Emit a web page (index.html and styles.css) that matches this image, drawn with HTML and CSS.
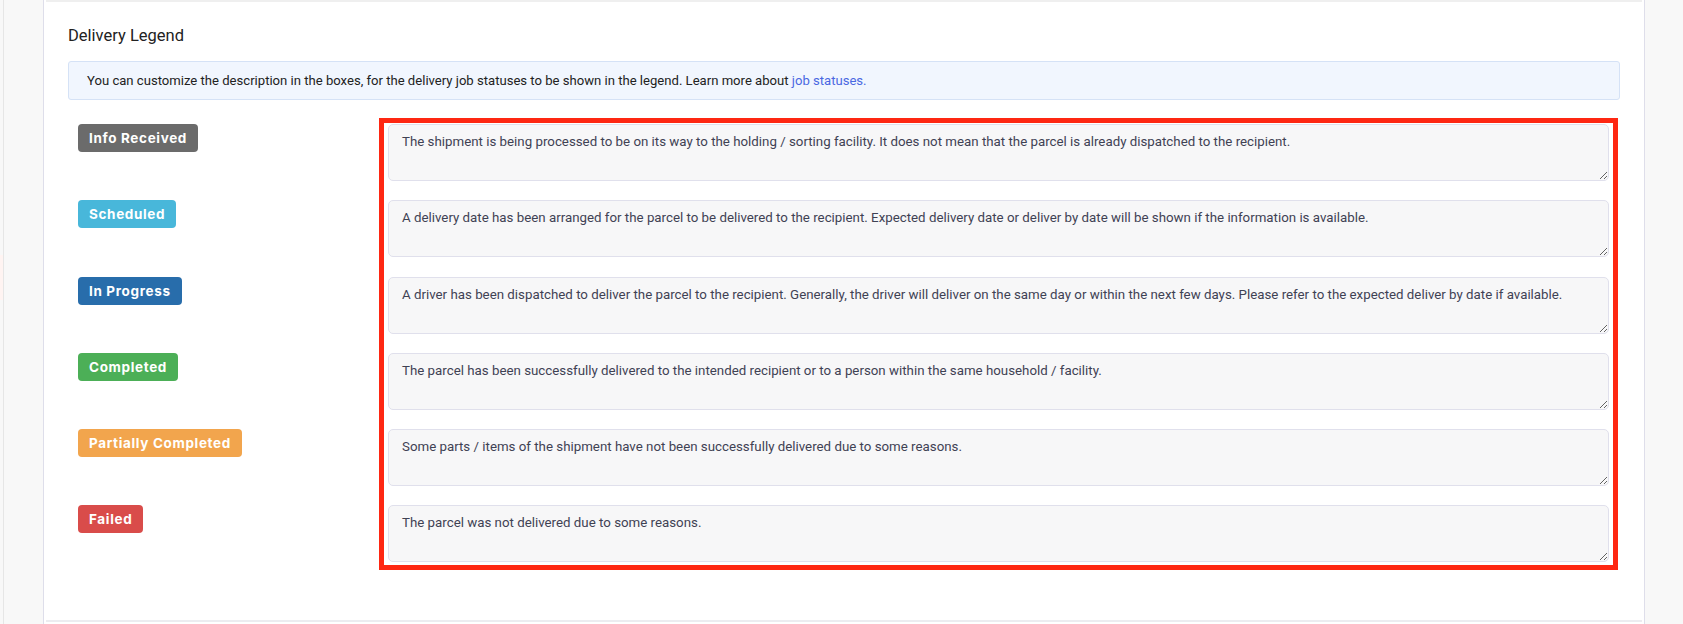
FILE: index.html
```html
<!DOCTYPE html>
<html lang="en">
<head>
    <meta charset="UTF-8">
    <meta name="viewport" content="width=device-width, initial-scale=1.0">
    <title>Delivery Legend</title>
    <link rel="stylesheet" href="styles.css">
</head>
<body>
    <div class="shell">
        <div class="side"><div class="side-mark"></div></div>

        <div class="panel">
            <div class="panel-top"></div>

            <div class="card">
                <h3 class="card-title">Delivery Legend</h3>

                <div class="notice">
                    You can customize the description in the boxes, for the delivery job statuses to be shown in the legend. Learn more about <a href="#">job statuses.</a>
                </div>

                <!-- Estados de entrega -->
                <div class="legend">
                    <div class="labels">
                        <div class="label-row"><span class="badge badge-info-received">Info Received</span></div>
                        <div class="label-row"><span class="badge badge-scheduled">Scheduled</span></div>
                        <div class="label-row"><span class="badge badge-progress">In Progress</span></div>
                        <div class="label-row"><span class="badge badge-completed">Completed</span></div>
                        <div class="label-row"><span class="badge badge-partial">Partially Completed</span></div>
                        <div class="label-row"><span class="badge badge-failed">Failed</span></div>
                    </div>

                    <div class="fields">
                        <textarea class="field">The shipment is being processed to be on its way to the holding / sorting facility. It does not mean that the parcel is already dispatched to the recipient.</textarea>
                        <textarea class="field">A delivery date has been arranged for the parcel to be delivered to the recipient. Expected delivery date or deliver by date will be shown if the information is available.</textarea>
                        <textarea class="field">A driver has been dispatched to deliver the parcel to the recipient. Generally, the driver will deliver on the same day or within the next few days. Please refer to the expected deliver by date if available.</textarea>
                        <textarea class="field">The parcel has been successfully delivered to the intended recipient or to a person within the same household / facility.</textarea>
                        <textarea class="field">Some parts / items of the shipment have not been successfully delivered due to some reasons.</textarea>
                        <textarea class="field">The parcel was not delivered due to some reasons.</textarea>
                    </div>
                </div>
            </div>

            <div class="panel-bottom"></div>
        </div>
    </div>
</body>
</html>
```

FILE: styles.css
```css
body {
    margin: 0;
    background-color: #f8f8f8;
    font-family: Roboto, "Noto Sans", sans-serif;
    color: #222;
    overflow: hidden;
}
.shell {
    display: flex;
    height: 624px;
}
.side {
    width: 39px;
    margin-left: 3px;
    border-left: 1px solid #e6e6e6;
}
.side-mark {
    width: 3px;
    height: 45px;
    margin-top: 255px;
    margin-left: -4px;
    background-color: #fff4f2;
}
.panel {
    width: 1600px;
    background-color: #fff;
    border-left: 1px solid #dedeea;
    border-right: 1px solid #dedeea;
    display: flex;
    flex-direction: column;
}
.panel-top {
    height: 2px;
    margin: 0 2px;
    background-color: #efefef;
}
.panel-bottom {
    height: 2px;
    margin: auto 2px 2px;
    background-color: #ececf0;
}
.card {
    padding: 0 24px;
}
.card-title {
    margin: 23px 0 14px;
    font-size: 16.5px;
    font-weight: 400;
    line-height: 22px;
    color: #222;
}

/* Caja de aviso */
.notice {
    height: 37px;
    padding: 0 18px;
    line-height: 37px;
    font-size: 13.1px;
    background-color: #f1f6fe;
    border: 1px solid #d5e2f6;
    border-radius: 3px;
}
.notice a {
    color: #4a68e2;
    text-decoration: none;
}

/* Leyenda */
.legend {
    display: flex;
    margin-top: 18px;
}
.labels {
    width: 301px;
    padding: 6px 0 0 10px;
    display: flex;
    flex-direction: column;
    gap: 19.3px;
}
.label-row {
    height: 57px;
}
.badge {
    display: inline-block;
    height: 28px;
    padding: 0 11px;
    line-height: 28px;
    font-family: Inter, "Noto Sans", sans-serif;
    font-size: 13.5px;
    font-weight: 700;
    letter-spacing: 0.65px;
    color: #fff;
    border-radius: 4px;
}
.badge-info-received { background-color: #6b6b6b; }
.badge-scheduled { background-color: #48b7da; }
.badge-progress { background-color: #286dab; }
.badge-completed { background-color: #4caf57; }
.badge-partial { background-color: #f2a54d; }
.badge-failed { background-color: #d94c4a; }

.fields {
    flex: 1;
    margin-right: 2px;
    padding: 1px 4px 3px;
    border: 5px solid #fe2712;
    display: flex;
    flex-direction: column;
    gap: 19.3px;
}
.field {
    display: block;
    box-sizing: border-box;
    width: 100%;
    height: 57px;
    margin: 0;
    padding: 7px 13px;
    font-family: Roboto, "Noto Sans", sans-serif;
    font-size: 13.3px;
    line-height: 20px;
    color: #3f4254;
    background-color: #f7f7f8;
    border: 1px solid #e0e0ec;
    border-radius: 5px;
}
```
